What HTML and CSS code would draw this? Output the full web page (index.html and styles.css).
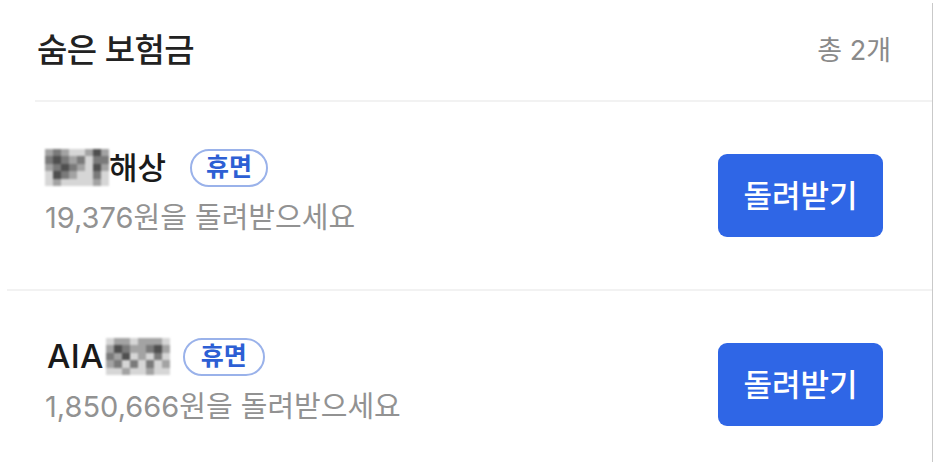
FILE: index.html
```html
<!DOCTYPE html>
<html lang="ko">
<head>
<meta charset="utf-8">
<link rel="stylesheet" href="styles.css">
</head>
<body>
<div class="frame">
  <header class="head">
    <h1 class="title">숨은 보험금</h1>
    <span class="count">총 2개</span>
  </header>
  <div class="divider divider-inset"></div>
  <section class="row">
    <div class="info">
      <div class="name-line">
        <span class="mask">
          <i class="g3"></i><i class="g2"></i><i class="g3"></i><i class="g4"></i><i class="g4"></i><i class="g3"></i><i class="g1"></i><i class="g3"></i>
          <i class="g2"></i><i class="g1"></i><i class="g2"></i><i class="g3"></i><i class="g2"></i><i class="g4"></i><i class="g2"></i><i class="g2"></i>
          <i class="g3"></i><i class="g2"></i><i class="g1"></i><i class="g2"></i><i class="g3"></i><i class="g4"></i><i class="g1"></i><i class="g3"></i>
          <i class="g4"></i><i class="g1"></i><i class="g2"></i><i class="g3"></i><i class="g4"></i><i class="g4"></i><i class="g2"></i><i class="g4"></i>
          <i class="g4"></i><i class="g3"></i><i class="g4"></i><i class="g4"></i><i class="g4"></i><i class="g4"></i><i class="g3"></i><i class="g4"></i>
        </span><span class="name">해상</span>
        <span class="badge badge-wide">휴면</span>
      </div>
      <p class="sub">19,376원을 돌려받으세요</p>
    </div>
    <button class="btn">돌려받기</button>
  </section>
  <div class="divider"></div>
  <section class="row">
    <div class="info">
      <div class="name-line">
        <span class="name name-latin">AIA</span><span class="mask mask-b">
          <i class="g4"></i><i class="g3"></i><i class="g3"></i><i class="g4"></i><i class="g3"></i><i class="g3"></i><i class="g3"></i><i class="g4"></i>
          <i class="g3"></i><i class="g1"></i><i class="g2"></i><i class="g3"></i><i class="g3"></i><i class="g2"></i><i class="g1"></i><i class="g3"></i>
          <i class="g2"></i><i class="g3"></i><i class="g1"></i><i class="g4"></i><i class="g3"></i><i class="g4"></i><i class="g2"></i><i class="g4"></i>
          <i class="g3"></i><i class="g2"></i><i class="g4"></i><i class="g2"></i><i class="g4"></i><i class="g2"></i><i class="g4"></i><i class="g3"></i>
          <i class="g4"></i><i class="g4"></i><i class="g3"></i><i class="g4"></i><i class="g4"></i><i class="g3"></i><i class="g4"></i><i class="g4"></i>
        </span>
        <span class="badge">휴면</span>
      </div>
      <p class="sub">1,850,666원을 돌려받으세요</p>
    </div>
    <button class="btn">돌려받기</button>
  </section>
</div>
</body>
</html>
```

FILE: styles.css
```css
* { box-sizing: border-box; }
html, body {
  margin: 0;
  padding: 0;
  background: #ffffff;
}
body {
  font-family: "Inter", "Noto Sans CJK KR", sans-serif;
  color: #1e1e1e;
  overflow: hidden;
  height: 467px;
}
.frame {
  width: 935px;
  height: 467px;
  position: relative;
}
.frame::after {
  content: "";
  position: absolute;
  right: 2px;
  top: 3px;
  bottom: 5px;
  width: 1px;
  background: #c9c9c9;
}
.head {
  height: 100px;
  display: flex;
  align-items: center;
  justify-content: space-between;
  padding: 0 44px 0 37px;
}
.title {
  margin: 0;
  font-size: 33px;
  font-weight: 500;
  letter-spacing: -0.6px;
  color: #222;
  line-height: 1;
}
.count {
  font-size: 27px;
  color: #8a8a8a;
  line-height: 1;
}
.divider {
  height: 2px;
  background: #f2f2f2;
  margin-left: 7px;
  margin-right: 2px;
}
.divider-inset {
  margin-left: 35px;
}
.row {
  height: 187px;
  display: flex;
  align-items: center;
  justify-content: space-between;
  padding: 0 52px 0 45px;
}
.info {
  display: flex;
  flex-direction: column;
  gap: 14px;
  margin-top: -10px;
}
.name-line {
  display: flex;
  align-items: center;
  height: 40px;
}
.name {
  font-size: 31px;
  font-weight: 500;
  color: #1a1a1a;
  line-height: 1;
}
.name-latin {
  font-size: 33px;
  margin-left: 2px;
  letter-spacing: 0.3px;
}
.mask {
  display: grid;
  grid-template-columns: repeat(8, 8px);
  grid-template-rows: repeat(5, 7.5px);
  filter: blur(1px);
}
.mask-b {
  margin-left: 2px;
}
.mask i { display: block; }
.g1 { background: #4f4f4f; }
.g2 { background: #7a7a7a; }
.g3 { background: #a3a3a3; }
.g4 { background: #d6d6d6; }
.badge {
  margin-left: 13px;
  height: 38px;
  padding: 0 16px;
  border: 2px solid #9ab2ea;
  border-radius: 19px;
  display: inline-flex;
  align-items: center;
  font-size: 25px;
  font-weight: 700;
  color: #2d5fd4;
  line-height: 1;
}
.badge-wide {
  margin-left: 24px;
  padding: 0 14px;
}
.sub {
  margin: 0;
  font-size: 29px;
  color: #929292;
  line-height: 1.1;
}
.btn {
  width: 165px;
  height: 83px;
  border: none;
  border-radius: 9px;
  background: #2f66e6;
  color: #ffffff;
  font-family: inherit;
  font-size: 31px;
  font-weight: 500;
  padding: 0;
  line-height: 1;
}
```
